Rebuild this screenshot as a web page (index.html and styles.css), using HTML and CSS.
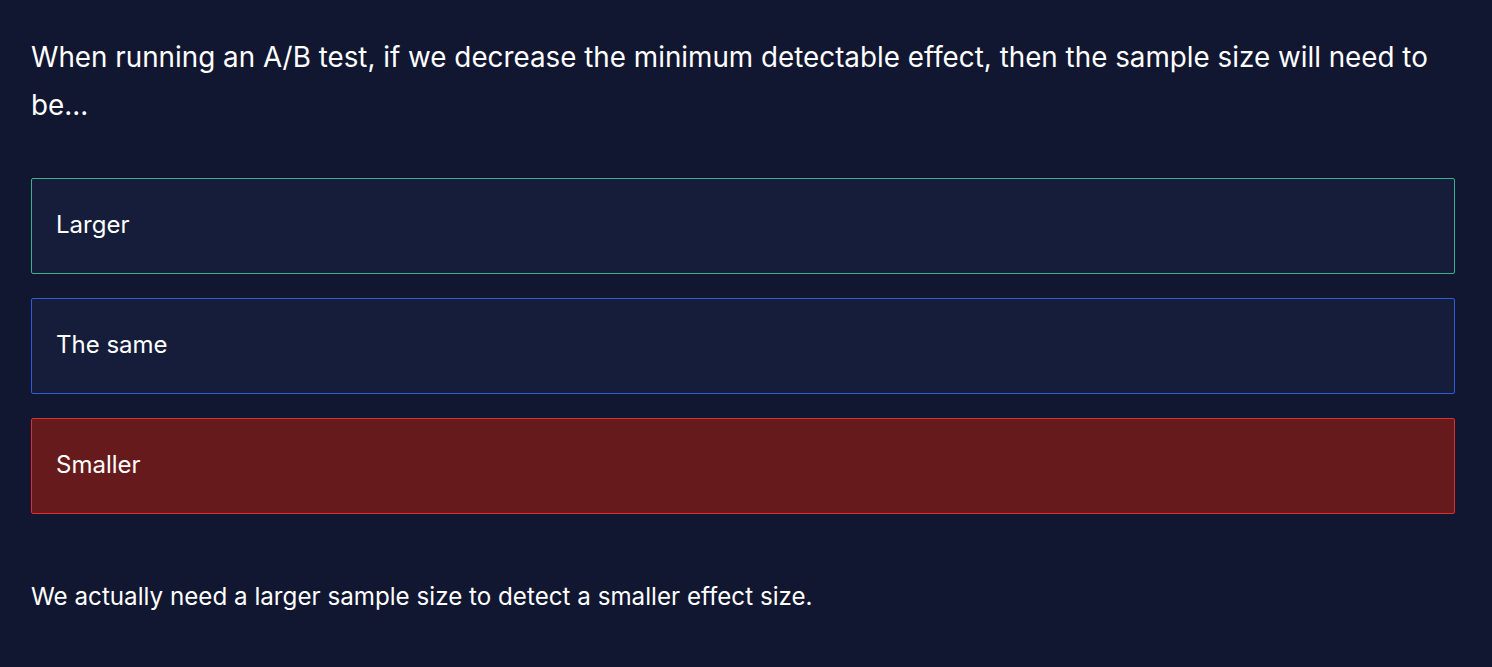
FILE: index.html
```html
<!DOCTYPE html>
<html>
<head>
<meta charset="utf-8">
<link rel="stylesheet" href="styles.css">
</head>
<body>
<main class="quiz">
  <p class="question">When running an A/B test, if we decrease the minimum detectable effect, then the sample size will need to be...</p>
  <div class="options">
    <div class="option option-correct">Larger</div>
    <div class="option option-neutral">The same</div>
    <div class="option option-wrong">Smaller</div>
  </div>
  <p class="feedback">We actually need a larger sample size to detect a smaller effect size.</p>
</main>
</body>
</html>
```
FILE: styles.css
```css
html, body {
  margin: 0;
  padding: 0;
  background: #111631;
  height: 100%;
}
body {
  font-family: "Inter", "Noto Sans", sans-serif;
  color: #ffffff;
}
.quiz {
  padding: 33px 37px 0 31px;
}
.question {
  margin: 0;
  font-size: 27.8px;
  line-height: 48px;
}
.options {
  display: flex;
  flex-direction: column;
  gap: 24px;
  margin-top: 49px;
}
.option {
  height: 91px;
  box-sizing: content-box;
  display: flex;
  align-items: center;
  padding: 0 24px 3px;
  border: 1px solid;
  border-radius: 2px;
  background: #151d3b;
  font-size: 24px;
}
.option-correct { border-color: #3bb08f; }
.option-neutral { border-color: #2f5bd8; }
.option-wrong { border-color: #dc2f2f; background: #671a1b; }
.feedback {
  margin: 63px 0 0;
  font-size: 24.2px;
  line-height: 40px;
}
```
